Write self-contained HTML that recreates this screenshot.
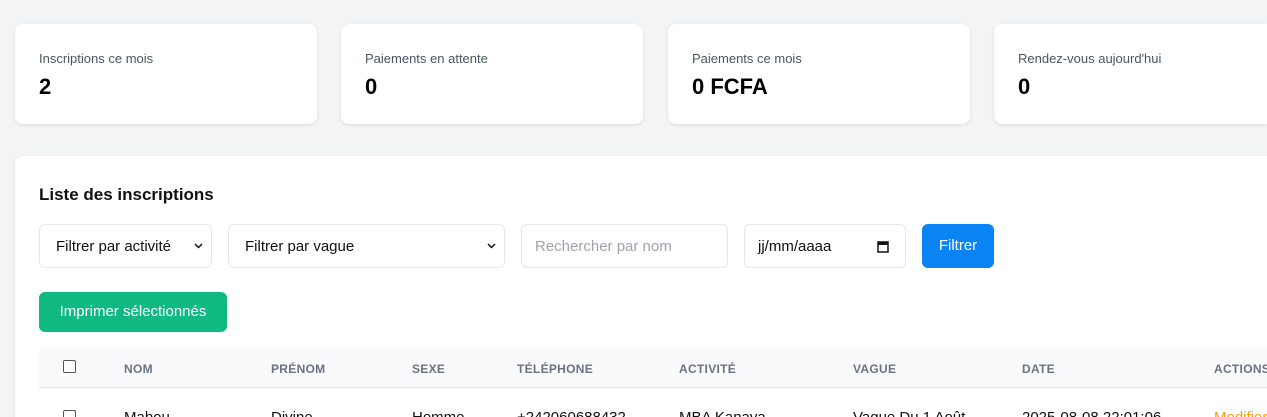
<!DOCTYPE html>
<html><head><meta charset="utf-8"><style>
*{box-sizing:border-box;margin:0;padding:0}
html,body{width:1267px;height:417px;overflow:hidden}
body{background:#f3f4f6;font-family:"Liberation Sans",sans-serif;color:#111827;position:relative}
.card{position:absolute;top:24px;height:100px;width:302px;background:#fff;border-radius:8px;box-shadow:0 1px 3px rgba(0,0,0,.1)}
.card .l{position:absolute;left:24px;top:27px;font-size:13px;color:#4b5563}
.card .v{position:absolute;left:24px;top:50px;font-size:22px;font-weight:bold;color:#000}
.main{position:absolute;left:15px;top:156px;width:1252px;height:261px;background:#fff;border-radius:8px 0 0 0;box-shadow:0 1px 3px rgba(0,0,0,.1)}
.a{position:absolute}
.ctl{position:absolute;top:224px;height:44px;border:1px solid #e5e7eb;border-radius:6px;background:#fff;font-size:15px;color:#111;padding-left:16px;line-height:44px}
.th{position:absolute;top:362px;font-size:12px;font-weight:bold;color:#6b7280;letter-spacing:.3px}
.td{position:absolute;top:413px;font-size:15px;line-height:10px;height:4px;overflow:visible;color:#111}
.cb{position:absolute;left:63px;width:13px;height:13px;border:1px solid #555;border-radius:2px;background:#fff}
</style></head><body>
<div class="card" style="left:15px"><div class="l">Inscriptions ce mois</div><div class="v">2</div></div>
<div class="card" style="left:341px"><div class="l">Paiements en attente</div><div class="v">0</div></div>
<div class="card" style="left:668px"><div class="l">Paiements ce mois</div><div class="v">0 FCFA</div></div>
<div class="card" style="left:994px;width:273px;border-radius:8px 0 0 8px"><div class="l">Rendez-vous aujourd'hui</div><div class="v">0</div></div>
<div class="main"></div>
<div class="a" style="left:39px;top:185px;font-size:17px;font-weight:bold;color:#111">Liste des inscriptions</div>
<div class="ctl" style="left:39px;width:173px">Filtrer par activité<svg style="position:absolute;right:8px;top:18px" width="9" height="6" viewBox="0 0 9 6"><path d="M1 1l3.5 3.5L8 1" fill="none" stroke="#111" stroke-width="1.5"/></svg></div>
<div class="ctl" style="left:228px;width:277px">Filtrer par vague<svg style="position:absolute;right:8px;top:18px" width="9" height="6" viewBox="0 0 9 6"><path d="M1 1l3.5 3.5L8 1" fill="none" stroke="#111" stroke-width="1.5"/></svg></div>
<div class="ctl" style="left:521px;width:207px;padding-left:13px;color:#9ca3af">Rechercher par nom</div>
<div class="ctl" style="left:744px;width:162px;padding-left:13px">jj/mm/aaaa<svg style="position:absolute;right:16px;top:15px" width="12" height="13" viewBox="0 0 12 13"><rect x="1" y="2" width="10" height="10" fill="none" stroke="#111" stroke-width="1.5"/><rect x="1" y="2" width="10" height="3" fill="#111"/></svg></div>
<div class="a" style="left:922px;top:224px;width:72px;height:44px;background:#0a84f5;border-radius:6px;color:#fff;font-size:15px;line-height:44px;text-align:center">Filtrer</div>
<div class="a" style="left:39px;top:292px;width:188px;height:40px;background:#10b981;border-radius:6px;color:#fff;font-size:15px;line-height:40px;text-align:center">Imprimer sélectionnés</div>
<div class="a" style="left:39px;top:348px;width:1228px;height:40px;background:#f9fafb;border-bottom:1px solid #e5e7eb"></div>
<div class="cb" style="top:360px"></div>
<div class="th" style="left:124px">NOM</div><div class="th" style="left:271px">PRÉNOM</div><div class="th" style="left:412px">SEXE</div><div class="th" style="left:517px">TÉLÉPHONE</div><div class="th" style="left:679px">ACTIVITÉ</div><div class="th" style="left:853px">VAGUE</div><div class="th" style="left:1022px">DATE</div><div class="th" style="left:1214px">ACTIONS</div>
<div class="cb" style="top:410px;height:7px;border-bottom:none;border-radius:2px 2px 0 0"></div>
<div class="td" style="left:124px">Mabou</div><div class="td" style="left:271px">Divine</div><div class="td" style="left:412px">Homme</div><div class="td" style="left:517px">+242060688432</div><div class="td" style="left:679px">MBA Kanava</div><div class="td" style="left:853px">Vague Du 1 Août</div><div class="td" style="left:1022px">2025-08-08 22:01:06</div><div class="td" style="left:1214px;color:#f59e0b">Modifier</div>
</body></html>
